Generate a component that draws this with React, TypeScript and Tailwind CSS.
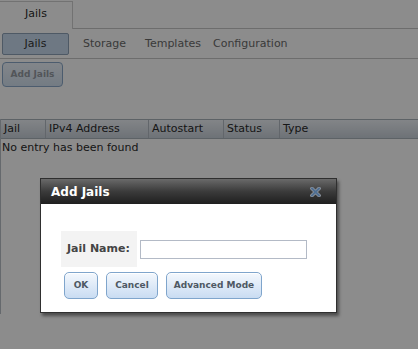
import React from "react";

const font = { fontFamily: '"DejaVu Sans", Verdana, sans-serif' };

function CloseIcon() {
  return (
    <svg width="11" height="10" viewBox="0 0 11 10">
      <path d="M2 1.5 L9 8.5 M9 1.5 L2 8.5" stroke="#8a9099" strokeWidth="3.6" strokeLinecap="square" />
      <path d="M2 1.5 L9 8.5 M9 1.5 L2 8.5" stroke="#4f6f93" strokeWidth="1.8" strokeLinecap="square" />
    </svg>
  );
}

function DlgButton({ children, w }: { children: React.ReactNode; w: string }) {
  return (
    <button
      className={`h-[27px] ${w} rounded-[5px] border border-[#7fa5cc] bg-gradient-to-b from-[#f4f8fd] to-[#c9dcf2] text-[9px] font-bold text-[#4e5863] shadow-[inset_0_1px_0_#ffffff]`}
    >
      {children}
    </button>
  );
}

export default function App() {
  return (
    <div className="relative h-[349px] w-[418px] overflow-hidden bg-white text-[11px] text-[#2a2a2a]" style={font}>
      {/* top tab bar */}
      <div className="flex h-[29px] items-end border-b border-[#c6c6c6]">
        <div className="flex h-[28px] w-[73px] items-center justify-center border-r border-t border-[#cfcfcf] bg-white text-[11px] text-[#2c2c2c] -mb-px pb-[2px]">
          Jails
        </div>
      </div>
      {/* sub tabs */}
      <div className="flex h-[30px] items-center border-b border-[#c6c6c6] pl-[2px] pt-[1px]">
        <div className="flex h-[22px] w-[67px] items-center justify-center rounded-[2px] border border-[#8ea2b8] bg-[#c9dbef] text-[#333]">
          Jails
        </div>
        <span className="ml-[14px] text-[#6a6a6a]">Storage</span>
        <span className="ml-[19px] text-[#6a6a6a]">Templates</span>
        <span className="ml-[12px] text-[#6a6a6a]">Configuration</span>
      </div>
      {/* add button */}
      <div className="pl-[2px] pt-[3px]">
        <button className="flex h-[25px] w-[61px] items-center justify-center rounded-[4px] border border-[#8aa8c8] bg-gradient-to-b from-[#eef4fb] to-[#d3e1f0] text-[9px] font-bold text-[#959ba3]">
          Add Jails
        </button>
      </div>
      {/* grid */}
      <div className="mt-[32px] h-[195px] border-l border-[#b8bfc7]">
        <div className="flex h-[20px] border-y border-[#aab2bb] bg-gradient-to-b from-[#eef2f7] to-[#c8d0d9] text-[#2a2a2a]">
          <div className="flex w-[45px] items-center border-r border-[#b3bbc4] pl-[3px]">Jail</div>
          <div className="flex w-[103px] items-center border-r border-[#b3bbc4] pl-[3px]">IPv4 Address</div>
          <div className="flex w-[75px] items-center border-r border-[#b3bbc4] pl-[3px]">Autostart</div>
          <div className="flex w-[56px] items-center border-r border-[#b3bbc4] pl-[3px]">Status</div>
          <div className="flex flex-1 items-center pl-[3px]">Type</div>
        </div>
        <div className="pl-[1px] pt-px">No entry has been found</div>
      </div>

      {/* overlay */}
      <div className="absolute inset-0 bg-black/45" />

      {/* dialog */}
      <div className="absolute left-[40px] top-[178px] w-[297px] border border-[#2f2f2f] bg-white shadow-[2px_3px_3px_rgba(0,0,0,0.45)]">
        <div className="flex h-[25px] items-center justify-between bg-gradient-to-b from-[#6a6a6a] via-[#3b3b3b] to-[#1f1f1f] pl-[10px] pr-[15px]">
          <span className="text-[12px] font-bold text-white">Add Jails</span>
          <CloseIcon />
        </div>
        <div className="pl-[20px] pt-[27px] pb-[13px]">
          <div className="flex items-center">
            <div className="flex h-[36px] w-[76px] items-center bg-[#f3f3f3] pl-[6px] text-[11px] font-bold text-[#444]">
              Jail Name:
            </div>
            <div className="ml-[3px] h-[19px] w-[167px] border border-[#b3bac6] bg-white" />
          </div>
          <div className="mt-[5px] flex gap-[8px] pl-[3px]">
            <DlgButton w="w-[34px]">OK</DlgButton>
            <DlgButton w="w-[52px]">Cancel</DlgButton>
            <DlgButton w="w-[96px]">Advanced Mode</DlgButton>
          </div>
        </div>
      </div>
    </div>
  );
}
